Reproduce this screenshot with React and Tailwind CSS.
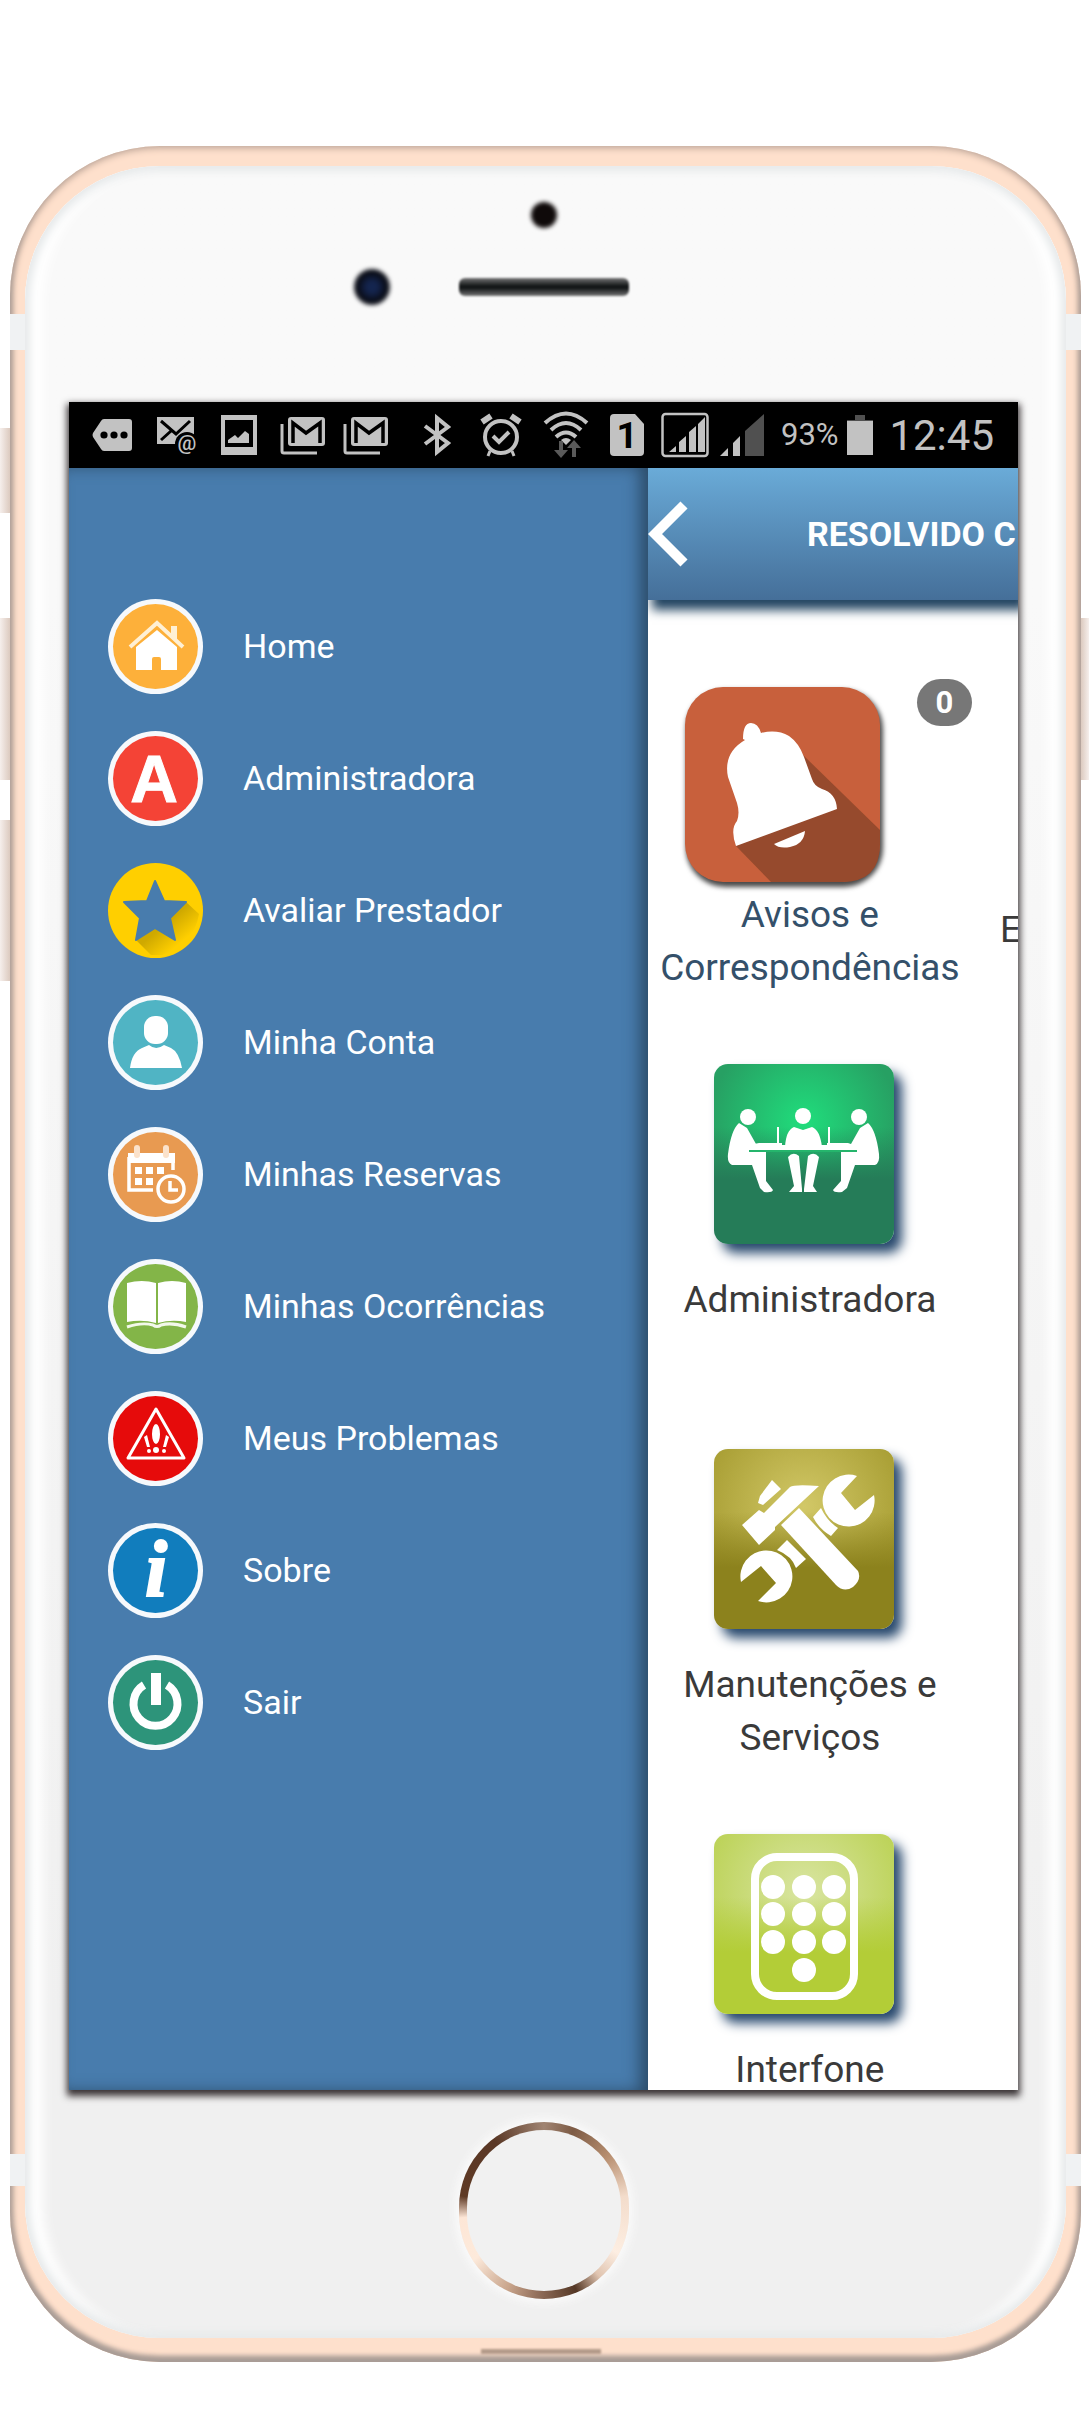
/* status bar icons */

const TagIcon = () => (
  <svg viewBox="0 0 48 48" className="w-12 h-12" fill="#c2c2c2">
    <path d="M15 8H40q3 0 3 3V37q0 3-3 3H15q-2 0-3-2L4 26q-1-2 0-4L12 10q1-2 3-2Z" />
    <g fill="#000">
      <circle cx="15" cy="24" r="3.6" />
      <circle cx="25" cy="24" r="3.6" />
      <circle cx="35" cy="24" r="3.6" />
    </g>
  </svg>
);

const MailIcon = () => (
  <svg viewBox="0 0 48 48" className="w-12 h-12">
    <path d="M5 6H42V33H5Z" fill="#c2c2c2" />
    <path d="M9 10L24 23L38 10M9 29L19 20" fill="none" stroke="#000" strokeWidth="3" />
    <circle cx="35" cy="33" r="12" fill="#000" />
    <text x="35" y="39" textAnchor="middle" fontSize="21" fontFamily="Roboto, sans-serif" fontWeight="500" fill="#c2c2c2">@</text>
  </svg>
);

const PictureIcon = () => (
  <svg viewBox="0 0 48 48" className="w-12 h-12">
    <path d="M6 4H42V44H6Z" fill="#c2c2c2" />
    <path d="M10 9H38V36H10Z" fill="#000" />
    <path d="M13 32V29L20 24L23 27L30 20L34 23V32Z" fill="#c2c2c2" />
  </svg>
);

const GmailIcon = () => (
  <svg viewBox="0 0 48 48" className="w-12 h-12">
    <path d="M4 13V40q0 2 2 2H39" fill="none" stroke="#c2c2c2" strokeWidth="3" />
    <rect x="10" y="6" width="37" height="29" rx="3" fill="#c2c2c2" />
    <path d="M15 32V12L28 22L42 12V32" fill="none" stroke="#000" strokeWidth="3.5" />
  </svg>
);

const BluetoothIcon = () => (
  <svg viewBox="0 0 48 48" className="w-12 h-12" fill="none" stroke="#c2c2c2" strokeWidth="4">
    <path d="M12 15L35 32L24 41V7L35 16L12 33" />
  </svg>
);

const AlarmIcon = () => (
  <svg viewBox="0 0 48 48" className="w-12 h-12" fill="none" stroke="#c2c2c2">
    <circle cx="24" cy="26" r="16" strokeWidth="4" />
    <path d="M5 11L14 5M43 11L34 5" strokeWidth="6" />
    <path d="M16 25L22 31L32 21" strokeWidth="4" />
    <path d="M13 40L11 45M35 40L37 45" strokeWidth="3" />
  </svg>
);

const WifiIcon = () => (
  <svg viewBox="0 0 48 48" className="w-12 h-12" fill="none" stroke="#c2c2c2" strokeWidth="4">
    <path d="M4 12Q25-7 46 12M10 19Q25 5 40 19M15 26Q25 17 35 26" />
    <path d="M20 29Q25 25 30 29L25 34Z" fill="#c2c2c2" stroke="none" />
    <path d="M20 30V42M33 46V34" stroke="#5a5a5a" />
    <path d="M13 39H27L20 47ZM26 37H40L33 29Z" fill="#5a5a5a" stroke="none" />
  </svg>
);

const SimIcon = () => (
  <svg viewBox="0 0 48 48" className="w-12 h-12">
    <path d="M11 3H32L41 13V41q0 4-4 4H11q-4 0-4-4V7q0-4 4-4Z" fill="#c2c2c2" />
    <text x="24" y="37" textAnchor="middle" fontSize="37" fontFamily="Roboto, sans-serif" fontWeight="700" fill="#000">1</text>
  </svg>
);

const SignalBoxIcon = () => (
  <svg viewBox="0 0 48 48" className="w-12 h-12" fill="#c2c2c2">
    <rect x="1.5" y="3" width="45" height="42" rx="3" fill="none" stroke="#c2c2c2" strokeWidth="2.5" />
    <path d="M8 41L15 35V41ZM18 41V31L25 25V41ZM28 41V21L35 15V41ZM37 41V13L44 6V41Z" />
  </svg>
);

const SignalIcon = () => (
  <svg viewBox="0 0 48 48" className="w-12 h-12" fill="#c2c2c2">
    <path d="M1 45L9 37V45ZM14 45V32L21 25V45Z" />
    <path d="M26 45V20L45 3V45Z" fill="#505050" />
  </svg>
);

const BatteryIcon = () => (
  <svg viewBox="0 0 26 40" className="w-[26px] h-10">
    <path d="M8 0H18V5H26V8H0V5H8Z" fill="#505050" />
    <path d="M0 6H26V40H0Z" fill="#c2c2c2" />
  </svg>
);

/* side menu icons */

const Badge = ({ color, children }) => (
  <svg viewBox="0 0 95 95" className="w-[95px] h-[95px] shrink-0">
    <circle cx="47.5" cy="47.5" r="47.5" fill="#f6f9fc" />
    <circle cx="47.5" cy="47.5" r="42.5" fill={color} />
    {children}
  </svg>
);

const HomeIcon = () => (
  <Badge color="#fdb03a">
    <path d="M63 27H69V42L63 36Z" fill="#fff0d4" />
    <path d="M22 48L49 24L75 48" fill="none" stroke="#fff0d4" strokeWidth="4" />
    <path d="M28 48L49 31L69 48V71H53V60q0-2-2-2H46q-2 0-2 2V71H28Z" fill="#fff" />
  </Badge>
);

const LetterIcon = () => (
  <Badge color="#f44336">
    <text
      x="46"
      y="71"
      textAnchor="middle"
      fontSize="66"
      fontWeight="700"
      fontFamily="Liberation Sans, sans-serif"
      fill="#fff"
      stroke="#fff"
      strokeWidth="1"
    >
      A
    </text>
  </Badge>
);

const StarIcon = () => (
  <svg viewBox="0 0 95 95" className="w-[95px] h-[95px] shrink-0">
    <defs>
      <linearGradient id="star-shade" x1="0.2" y1="0.2" x2="0.8" y2="0.8">
        <stop offset="0.4" stopColor="#cfa900" />
        <stop offset="0.9" stopColor="#ffcf00" />
      </linearGradient>
    </defs>
    <circle cx="47.5" cy="47.5" r="47.5" fill="#ffcf00" />
    <path d="M78 39L91 51Q86 82 54 92L43 92L28 77L47 55Z" fill="url(#star-shade)" />
    <path
      d="M47 18L56 38L78 39L62 55L67 77L47 65L28 77L32 55L16 39L39 38Z"
      fill="#487cad"
      stroke="#487cad"
      strokeWidth="2"
      strokeLinejoin="round"
    />
  </svg>
);

const UserIcon = () => (
  <Badge color="#50b4c4">
    <rect x="36" y="21" width="24" height="28" rx="11" fill="#fff" />
    <path d="M22 73Q24 57 34 53L41 50Q48 56 56 50L63 53Q71 57 74 73Z" fill="#fff" />
  </Badge>
);

const CalendarIcon = () => (
  <Badge color="#e89a51">
    <path d="M20 26H67V36H20Z" fill="#fff" />
    <path d="M65 30V43M45 63H21V30" fill="none" stroke="#fff" strokeWidth="3.5" />
    <path d="M29 21V28M58 21V28" stroke="#fbe2cb" strokeWidth="6" strokeLinecap="round" />
    <path d="M27 40H34V47H27ZM38 40H45V47H38ZM49 40H56V47H49ZM27 51H34V58H27ZM38 51H45V58H38Z" fill="#fff" />
    <circle cx="63" cy="62" r="13" fill="#e89a51" stroke="#fff" strokeWidth="3.5" />
    <path d="M62 54V63H70" fill="none" stroke="#fff" strokeWidth="3.5" />
  </Badge>
);

const BookIcon = () => (
  <Badge color="#83b548">
    <path d="M19 24Q34 20 48 24V64Q34 60 19 63ZM50 24Q64 20 78 24V63Q64 60 50 64Z" fill="#fff" />
    <path d="M19 68Q34 63 45 66Q49 69 53 66Q64 63 78 68" fill="none" stroke="#f2f8ea" strokeWidth="3" />
  </Badge>
);

const WarningIcon = () => (
  <Badge color="#e60b0b">
    <path d="M48 18L76 67H20Z" fill="none" stroke="#fff" strokeWidth="3" strokeLinejoin="round" />
    <g fill="#fff">
      <ellipse cx="48" cy="43" rx="4" ry="10" />
      <circle cx="48" cy="59" r="3" />
      <path d="M36 46L39 44L42 56H39ZM61 46L58 44L55 56H58Z" />
      <circle cx="41" cy="60" r="2" />
      <circle cx="56" cy="60" r="2" />
    </g>
  </Badge>
);

const InfoIcon = () => (
  <Badge color="#117dbd">
    <text
      x="48"
      y="73"
      textAnchor="middle"
      fontSize="80"
      fontWeight="700"
      fontStyle="italic"
      fontFamily="Liberation Serif, serif"
      fill="#fff"
      stroke="#fff"
      strokeWidth="2"
    >
      i
    </text>
  </Badge>
);

const PowerIcon = () => (
  <Badge color="#2d947a">
    <path d="M36 30A22 22 0 1 0 59 30" fill="none" stroke="#fff" strokeWidth="8" />
    <path d="M43 18H53V50H43Z" fill="#fff" />
  </Badge>
);

/* tile icons */

const BellIcon = () => (
  <svg viewBox="0 0 195 195" className="w-[195px] h-[195px]">
    <path d="M117 67L195 143V157Q195 195 157 195H86L51 159Z" fill="#964a2d" />
    <path
      d="M58 52Q58 36 66 36Q73 36 76 46Q92 42 104 49Q114 56 119 70L127 92Q129 99 137 102Q151 106 152 122L51 159Q45 142 52 134Q55 126 52 116L43 90Q38 66 60 53Z"
      fill="#fff"
    />
    <path d="M89 157L120 144Q119 157 105 160Q94 162 89 157Z" fill="#fff" />
  </svg>
);

const MeetingIcon = () => (
  <svg viewBox="0 0 180 180" className="w-full h-full" fill="#fff">
    <circle cx="34" cy="53" r="8" />
    <circle cx="89" cy="52" r="8" />
    <circle cx="145" cy="53" r="8" />
    <path d="M25 59L33 64L42 80L52 86V117L59 126Q58 129 50 128L46 124L38 101H18Q13 99 14 90Q17 66 25 59Z" />
    <path d="M154 59L146 64L137 80L127 86V117L119 126Q120 129 128 128L133 124L141 101H161Q166 99 165 90Q162 66 154 59Z" />
    <path d="M71 83Q72 66 80 63L89 66L98 63Q106 66 108 83Z" />
    <path d="M45 79H68V81H113V79H134L143 82V86H35V81Z" />
    <path d="M63 63H65V81H63ZM114 63H116V81H114Z" />
    <path d="M74 93Q79 87 85 92L88 125V128H75L80 122ZM105 93Q100 87 94 92L90 125V128H103L99 122Z" />
    <path d="M35 86H143V88H35Z" fill="#25b56c" />
  </svg>
);

const ToolsIcon = () => (
  <svg viewBox="0 0 180 180" className="w-full h-full" fill="#fff">
    <path d="M58 31L67 40L49 56L44 54L46 47Z" />
    <path d="M28 76L45 61L50 64L76 38Q80 35 105 37L61 78V81L45 96Z" />
    <path d="M85 59L67 76L122 136Q130 144 139 138Q148 130 144 122Z" />
    <path d="M143 27L127 44L141 61L160 46A26 26 0 1 1 143 27Z" />
    <path d="M107 59L99 68Q105 80 117 87L124 79Q113 72 107 59Z" />
    <path d="M44 152L62 134L47 117L27 133A26 26 0 1 1 44 152Z" />
    <path d="M73 91L63 101Q78 107 82 119L92 110Z" />
  </svg>
);

const KeypadIcon = () => (
  <svg viewBox="0 0 180 180" className="w-full h-full" fill="#fff">
    <rect x="41" y="23" width="99" height="139" rx="22" fill="none" stroke="#fff" strokeWidth="8" />
    {[53, 80, 108].map((y) => [59, 90, 120].map((x) => <circle key={`${x}-${y}`} cx={x} cy={y} r="12" />))}
    <circle cx="90" cy="136" r="12" />
  </svg>
);

const menuItems = [
  { label: 'Home', Icon: HomeIcon },
  { label: 'Administradora', Icon: LetterIcon },
  { label: 'Avaliar Prestador', Icon: StarIcon },
  { label: 'Minha Conta', Icon: UserIcon },
  { label: 'Minhas Reservas', Icon: CalendarIcon },
  { label: 'Minhas Ocorrências', Icon: BookIcon },
  { label: 'Meus Problemas', Icon: WarningIcon },
  { label: 'Sobre', Icon: InfoIcon },
  { label: 'Sair', Icon: PowerIcon },
];

const tiles = [
  {
    label: 'Administradora',
    Icon: MeetingIcon,
    bg: 'bg-[linear-gradient(to_bottom,#257c5800_35%,#257c58_64%),radial-gradient(circle_at_50%_32%,#20dd7c,#27a063_62%)]',
  },
  {
    label: 'Manutenções e Serviços',
    Icon: ToolsIcon,
    bg: 'bg-[linear-gradient(to_bottom,#8c821d00_35%,#8c821d_66%),radial-gradient(circle_at_50%_32%,#d2c867,#aaa036_66%)]',
  },
  {
    label: 'Interfone',
    Icon: KeypadIcon,
    bg: 'bg-[linear-gradient(to_bottom,#b3cd3700_35%,#b3cd37_66%),radial-gradient(circle_at_50%_32%,#d9e5a2,#bdd35a_66%)]',
  },
];

function StatusBar() {
  return (
    <div className="flex items-center h-[66px] shrink-0 bg-black pl-5 pr-6 text-[#c2c2c2]">
      <div className="flex gap-[15px]">
        <TagIcon />
        <MailIcon />
        <PictureIcon />
        <GmailIcon />
        <GmailIcon />
      </div>
      <div className="flex gap-4 ml-6">
        <BluetoothIcon />
        <AlarmIcon />
        <WifiIcon />
      </div>
      <div className="flex gap-[10px] ml-[14px]">
        <SimIcon />
        <SignalBoxIcon />
        <SignalIcon />
      </div>
      <div className="flex items-center gap-2 ml-[14px]">
        <span className="text-[31px]">93%</span>
        <BatteryIcon />
      </div>
      <span className="ml-auto text-[42px]">12:45</span>
    </div>
  );
}

function SideMenu() {
  return (
    <nav className="w-[61%] shrink-0 bg-[#487cad] pt-[131px] pl-[39px] shadow-[inset_-10px_0_16px_-2px_#2c4c69]">
      <ul className="flex flex-col gap-[37px]">
        {menuItems.map(({ label, Icon }) => (
          <li key={label}>
            <a href="#" className="flex items-center gap-10 text-[34px] text-white">
              <Icon />
              {label}
            </a>
          </li>
        ))}
      </ul>
    </nav>
  );
}

function Content() {
  return (
    <main className="flex-1 min-w-0 overflow-hidden bg-white">
      <header className="flex items-center h-[132px] bg-linear-to-b from-[#6aabd8] to-[#456f99] shadow-[6px_8px_10px_2px_#234562]">
        <button type="button" aria-label="Voltar" className="w-10 shrink-0">
          <svg viewBox="0 0 40 66" className="w-10 h-[66px]" fill="none" stroke="#fff" strokeWidth="10">
            <path d="M36 4L7 33L36 62" />
          </svg>
        </button>
        <h1 className="ml-[119px] text-[34px] font-bold text-white whitespace-nowrap">RESOLVIDO C</h1>
      </header>

      <div className="grid grid-cols-[324px_324px] auto-rows-[385px] pt-[63px] text-[37px] leading-[53px] text-[#3a3a3a]">
        <a href="#" className="text-center text-[#34506a]">
          <div className="flex items-start h-[225px] pt-4 pl-[37px]">
            <div className="mt-2 mr-[37px] rounded-[38px] bg-[#c8603c] shadow-[2px_4px_5px_1px_#4a4a4a]">
              <BellIcon />
            </div>
            <span className="w-[55px] h-[47px] rounded-full bg-[#777] text-[31px] leading-[47px] font-bold text-white">
              0
            </span>
          </div>
          Avisos e Correspondências
        </a>
        <a href="#" className="pt-60 pl-7">
          E
        </a>

        {tiles.map(({ label, Icon, bg }) => (
          <a key={label} href="#" className="col-start-1 px-8 text-center">
            <div className="flex justify-center h-[225px] pt-4 pr-3">
              <div className={`w-[180px] h-[180px] rounded-[14px] shadow-[8px_9px_12px_#27486d] ${bg}`}>
                <Icon />
              </div>
            </div>
            {label}
          </a>
        ))}
      </div>
    </main>
  );
}

export default function App() {
  return (
    <div className="flex min-h-screen bg-white pt-[146px] pb-[61px] font-[Roboto,sans-serif]">
      {/* volume keys */}
      <div className="flex flex-col w-[10px] shrink-0 pt-[282px]">
        <div className="h-[85px] bg-linear-to-r from-[#f6efec] to-[#dccabf]" />
        <div className="h-[162px] mt-[105px] bg-linear-to-r from-[#f6efec] to-[#dccabf]" />
        <div className="h-[161px] mt-10 bg-linear-to-r from-[#f6efec] to-[#dccabf]" />
      </div>

      <div className="relative flex flex-1 min-w-0 rounded-[150px] bg-[#fee0cc] px-[15px] pt-5 pb-6 shadow-[inset_0_-4px_5px_2px_#a89c96,inset_0_0_6px_3px_#cdb3a4]">
        {/* antenna bands */}
        <div className="absolute left-0 top-[168px] w-[15px] h-9 bg-[#f0f2f3]" />
        <div className="absolute right-0 top-[168px] w-[15px] h-9 bg-[#f0f2f3]" />
        <div className="absolute left-0 bottom-[176px] w-[15px] h-8 bg-[#f0f2f3]" />
        <div className="absolute right-0 bottom-[176px] w-[15px] h-8 bg-[#f0f2f3]" />
        <div className="absolute left-[44%] bottom-[8px] w-[120px] h-[5px] bg-[#b39a89] blur-[1px]" />

        <div className="flex flex-col flex-1 min-w-0 rounded-[135px] bg-linear-to-b from-[#f9f9f9] from-20% to-[#f0f0f0] to-85% pl-[44px] pr-[48px] shadow-[inset_0_0_8px_5px_#e6e9ea,inset_22px_0_12px_-4px_#fff,inset_-22px_0_12px_-4px_#fff]">
          <div className="flex flex-col items-center h-[236px] shrink-0 pt-9">
            <div className="w-[26px] h-[26px] rounded-full bg-[#0f0a0a] blur-[2px]" />
            <div className="grid grid-cols-[1fr_auto_1fr] items-center w-full mt-[41px]">
              <div className="justify-self-end mr-[69px] w-9 h-9 rounded-full bg-[radial-gradient(circle,#14254f_20%,#0a0d18_55%,#333)] blur-[2px]" />
              <div className="w-[170px] h-[18px] rounded-md bg-linear-to-b from-[#777] via-[#0c0f10] to-[#777] blur-[1px]" />
            </div>
          </div>

          <div className="flex flex-col aspect-[949/1688] overflow-hidden shadow-[0_4px_7px_2px_#3a3436]">
            <StatusBar />
            <div className="flex flex-1 min-h-0">
              <SideMenu />
              <Content />
            </div>
          </div>

          <button
            type="button"
            aria-label="Início"
            className="self-center w-[170px] h-[177px] mt-8 rounded-full p-2 bg-[conic-gradient(#a08472,#7d5b45_20deg,#b88f70_50deg,#f3dccb_80deg,#fdeee2_120deg,#e0c4b0_140deg,#553826_158deg,#93705c_185deg,#c9a58c_205deg,#fdeadb_235deg,#fde6d6_265deg,#5f3a25_280deg,#5a3826_325deg,#a08472)] shadow-[0_0_8px_4px_#fafafa]"
          >
            <span className="block w-full h-full rounded-full bg-[#f1f1f1]" />
          </button>
        </div>
      </div>

      {/* power key */}
      <div className="flex flex-col w-2 shrink-0 pt-[472px]">
        <div className="h-[162px] bg-linear-to-l from-[#f6efec] to-[#dccabf]" />
      </div>
    </div>
  );
}
